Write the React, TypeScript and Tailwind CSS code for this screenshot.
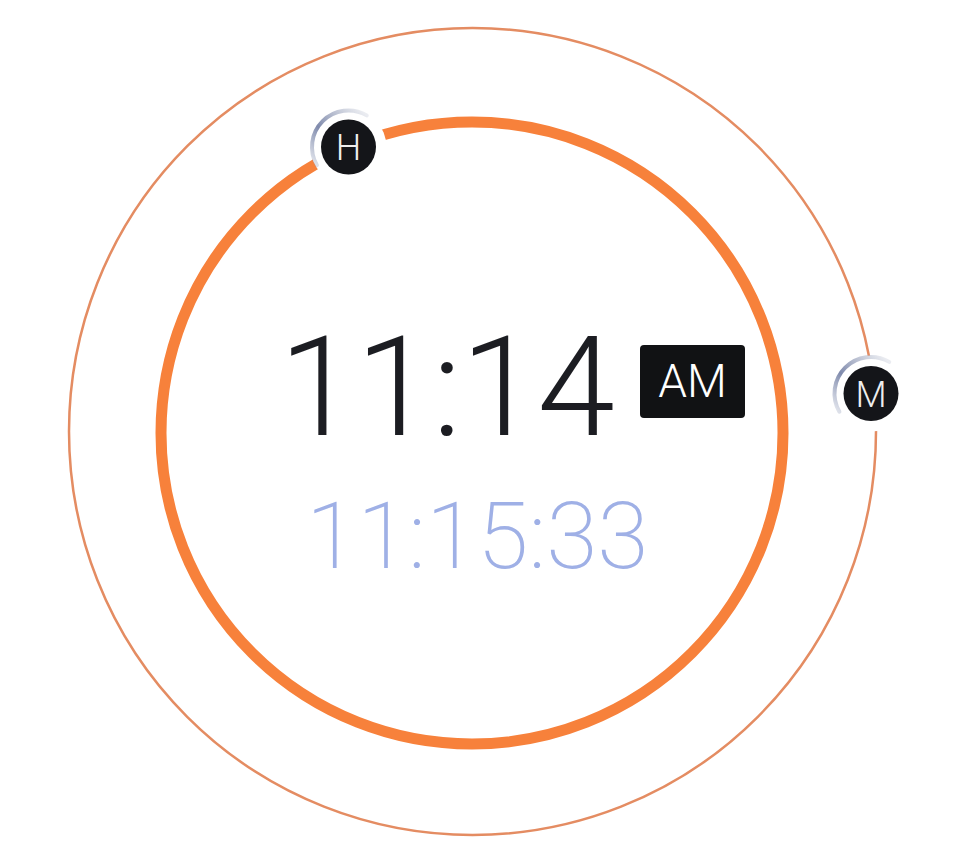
import React from "react";

function Badge({ cx, cy, label, id }: { cx: number; cy: number; label: string; id: string }) {
  const r = 36.5;
  const a1 = (150 * Math.PI) / 180;
  const a2 = (300 * Math.PI) / 180;
  const x1 = cx + r * Math.cos(a1);
  const y1 = cy + r * Math.sin(a1);
  const x2 = cx + r * Math.cos(a2);
  const y2 = cy + r * Math.sin(a2);
  return (
    <g>
      <defs>
        <linearGradient id={id} x1={x1} y1={y1} x2={x2} y2={y2} gradientUnits="userSpaceOnUse">
          <stop offset="0" stopColor="#8d98b6" stopOpacity="0.3" />
          <stop offset="0.4" stopColor="#7f8aac" stopOpacity="1" />
          <stop offset="1" stopColor="#9aa3bb" stopOpacity="0.2" />
        </linearGradient>
      </defs>
      <circle cx={cx} cy={cy} r={38} fill="#ffffff" />
      <path
        d={`M ${x1} ${y1} A ${r} ${r} 0 0 1 ${x2} ${y2}`}
        fill="none"
        stroke={`url(#${id})`}
        strokeWidth={4}
        strokeLinecap="round"
      />
      <circle cx={cx} cy={cy} r={27.5} fill="#141519" />
      <text
        x={cx}
        y={cy + 13}
        textAnchor="middle"
        fill="#eeeeee"
        fontFamily="Roboto, 'Liberation Sans', sans-serif"
        fontWeight={300}
        fontSize={36}
      >
        {label}
      </text>
    </g>
  );
}

export default function App() {
  return (
    <div className="relative w-[954px] h-[860px] bg-white overflow-hidden">
      <svg className="absolute inset-0" width={954} height={860} viewBox="0 0 954 860">
        <circle cx={472.5} cy={431.5} r={403.5} fill="none" stroke="#e48c62" strokeWidth={2.5} />
        <circle cx={472} cy={433} r={311} fill="none" stroke="#f7813b" strokeWidth={11} />
        <Badge cx={348.5} cy={147} label="H" id="gh" />
        <Badge cx={871} cy={393.5} label="M" id="gm" />
      </svg>
      <div className="absolute inset-0 flex flex-col pl-[279px] pt-[317px] font-['Roboto','Liberation_Sans',sans-serif]">
        <div className="flex items-start">
          <span className="text-[140px] leading-[140px] font-light text-[#1c1d22] tracking-[-1px]">11:14</span>
          <span className="ml-[26px] mt-[28px] h-[73px] w-[105px] rounded-[4px] bg-[#111214] text-white text-[46px] leading-[73px] text-center font-light">
            AM
          </span>
        </div>
        <div className="mt-[33px] pl-[27px] text-[93px] leading-[93px] font-extralight text-[#9fb0e6]">11:15:33</div>
      </div>
    </div>
  );
}
